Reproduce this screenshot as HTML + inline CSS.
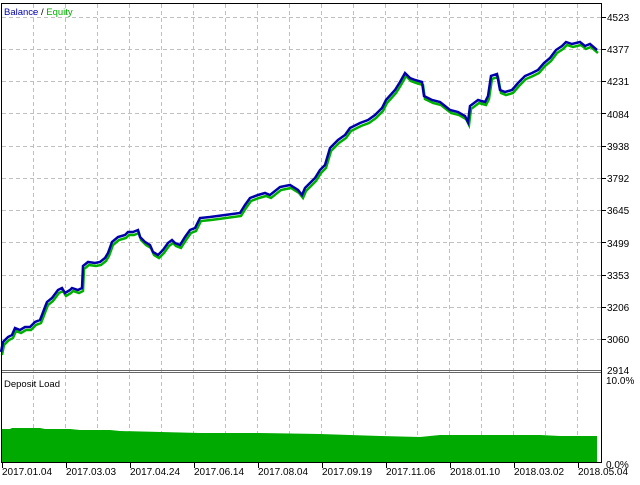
<!DOCTYPE html>
<html><head><style>
body{margin:0;width:640px;height:480px;background:#fff;overflow:hidden;font-family:"Liberation Sans",sans-serif;}
svg text{font-family:"Liberation Sans",sans-serif;font-size:10px;fill:#000;}
</style></head><body>
<svg width="640" height="480" xmlns="http://www.w3.org/2000/svg">
<g stroke="#c0c0c0" stroke-dasharray="4,3" stroke-width="1">
<line x1="2" y1="17.5" x2="601" y2="17.5"/><line x1="2" y1="49.5" x2="601" y2="49.5"/><line x1="2" y1="81.5" x2="601" y2="81.5"/><line x1="2" y1="113.5" x2="601" y2="113.5"/><line x1="2" y1="146.5" x2="601" y2="146.5"/><line x1="2" y1="178.5" x2="601" y2="178.5"/><line x1="2" y1="210.5" x2="601" y2="210.5"/><line x1="2" y1="242.5" x2="601" y2="242.5"/><line x1="2" y1="275.5" x2="601" y2="275.5"/><line x1="2" y1="307.5" x2="601" y2="307.5"/><line x1="2" y1="339.5" x2="601" y2="339.5"/>
<line x1="33.5" y1="4" x2="33.5" y2="462"/><line x1="65.5" y1="4" x2="65.5" y2="462"/><line x1="97.5" y1="4" x2="97.5" y2="462"/><line x1="129.5" y1="4" x2="129.5" y2="462"/><line x1="161.5" y1="4" x2="161.5" y2="462"/><line x1="193.5" y1="4" x2="193.5" y2="462"/><line x1="225.5" y1="4" x2="225.5" y2="462"/><line x1="257.5" y1="4" x2="257.5" y2="462"/><line x1="289.5" y1="4" x2="289.5" y2="462"/><line x1="321.5" y1="4" x2="321.5" y2="462"/><line x1="353.5" y1="4" x2="353.5" y2="462"/><line x1="385.5" y1="4" x2="385.5" y2="462"/><line x1="417.5" y1="4" x2="417.5" y2="462"/><line x1="449.5" y1="4" x2="449.5" y2="462"/><line x1="481.5" y1="4" x2="481.5" y2="462"/><line x1="513.5" y1="4" x2="513.5" y2="462"/><line x1="545.5" y1="4" x2="545.5" y2="462"/><line x1="577.5" y1="4" x2="577.5" y2="462"/>
</g>
<polygon fill="#00aa00" points="2,462 2,429 10,429 12,428 40,428 45,429 70,429 80,430 110,430 120,431 200,433 260,433 320,434 380,436 420,437 440,435 500,435 540,435 560,436 597,436 597,462"/>
<g fill="none" stroke-width="2.5" stroke-linejoin="miter">
<polyline stroke="#00b000" transform="translate(1,3)" points="1,352 3,342 8,337 12,335 15,328 20,330 25,327 30,327 35,322 40,320 42,315 45,307 47,302 52,298 58,290 62,288 65,293 70,290 72,288 78,290 82,288 83,266 88,262 95,263 100,262 105,258 108,253 112,242 118,237 125,235 128,232 133,232 138,230 140,237 145,242 150,245 153,252 158,255 163,250 168,243 172,240 175,243 180,245 185,237 190,230 195,228 200,218 210,217 225,215 240,213 245,205 250,198 258,195 265,193 270,195 280,187 290,185 298,190 302,195 305,188 315,178 320,170 325,165 330,148 338,140 345,135 350,128 360,123 368,120 375,115 382,108 386,100 395,90 400,82 405,73 410,78 415,80 422,82 424,96 432,100 440,102 445,106 450,110 458,112 465,116 468,122 470,106 478,100 485,102 488,96 491,76 497,74 500,90 505,92 512,90 518,83 525,76 532,73 538,70 544,63 550,58 556,50 562,46 566,42 572,44 580,42 585,46 590,44 597,50"/>
<polyline stroke="#0000aa" points="1,352 3,342 8,337 12,335 15,328 20,330 25,327 30,327 35,322 40,320 42,315 45,307 47,302 52,298 58,290 62,288 65,293 70,290 72,288 78,290 82,288 83,266 88,262 95,263 100,262 105,258 108,253 112,242 118,237 125,235 128,232 133,232 138,230 140,237 145,242 150,245 153,252 158,255 163,250 168,243 172,240 175,243 180,245 185,237 190,230 195,228 200,218 210,217 225,215 240,213 245,205 250,198 258,195 265,193 270,195 280,187 290,185 298,190 302,195 305,188 315,178 320,170 325,165 330,148 338,140 345,135 350,128 360,123 368,120 375,115 382,108 386,100 395,90 400,82 405,73 410,78 415,80 422,82 424,96 432,100 440,102 445,106 450,110 458,112 465,116 468,122 470,106 478,100 485,102 488,96 491,76 497,74 500,90 505,92 512,90 518,83 525,76 532,73 538,70 544,63 550,58 556,50 562,46 566,42 572,44 580,42 585,46 590,44 597,50"/>
</g>
<rect x="1.5" y="3.5" width="600" height="459" stroke="#000" fill="none"/>
<line x1="2" y1="370.5" x2="601" y2="370.5" stroke="#666"/>
<line x1="2" y1="372.5" x2="601" y2="372.5" stroke="#666"/>
<g stroke="#000">
<line x1="602" y1="17.5" x2="606" y2="17.5"/><line x1="602" y1="49.5" x2="606" y2="49.5"/><line x1="602" y1="81.5" x2="606" y2="81.5"/><line x1="602" y1="113.5" x2="606" y2="113.5"/><line x1="602" y1="146.5" x2="606" y2="146.5"/><line x1="602" y1="178.5" x2="606" y2="178.5"/><line x1="602" y1="210.5" x2="606" y2="210.5"/><line x1="602" y1="242.5" x2="606" y2="242.5"/><line x1="602" y1="275.5" x2="606" y2="275.5"/><line x1="602" y1="307.5" x2="606" y2="307.5"/><line x1="602" y1="339.5" x2="606" y2="339.5"/>
<line x1="2.5" y1="463" x2="2.5" y2="468"/><line x1="66.5" y1="463" x2="66.5" y2="468"/><line x1="130.5" y1="463" x2="130.5" y2="468"/><line x1="194.5" y1="463" x2="194.5" y2="468"/><line x1="258.5" y1="463" x2="258.5" y2="468"/><line x1="322.5" y1="463" x2="322.5" y2="468"/><line x1="386.5" y1="463" x2="386.5" y2="468"/><line x1="450.5" y1="463" x2="450.5" y2="468"/><line x1="514.5" y1="463" x2="514.5" y2="468"/><line x1="578.5" y1="463" x2="578.5" y2="468"/>
</g>
<text x="4" y="15" style="font-size:9.5px"><tspan fill="#0000aa">Balance</tspan> / <tspan fill="#00aa00">Equity</tspan></text>
<text x="4" y="387" style="font-size:9.5px">Deposit Load</text>
<g>
<text x="607" y="21">4523</text><text x="607" y="53">4377</text><text x="607" y="85">4231</text><text x="607" y="118">4084</text><text x="607" y="150">3938</text><text x="607" y="182">3792</text><text x="607" y="214">3645</text><text x="607" y="247">3499</text><text x="607" y="279">3353</text><text x="607" y="311">3206</text><text x="607" y="343">3060</text><text x="607" y="374">2914</text>
<text x="606" y="384">10.0%</text><text x="606" y="468">0.0%</text>
<text x="2" y="475">2017.01.04</text><text x="66" y="475">2017.03.03</text><text x="130" y="475">2017.04.24</text><text x="194" y="475">2017.06.14</text><text x="258" y="475">2017.08.04</text><text x="322" y="475">2017.09.19</text><text x="386" y="475">2017.11.06</text><text x="450" y="475">2018.01.10</text><text x="514" y="475">2018.03.02</text><text x="578" y="475">2018.05.04</text>
</g>
</svg>
</body></html>
